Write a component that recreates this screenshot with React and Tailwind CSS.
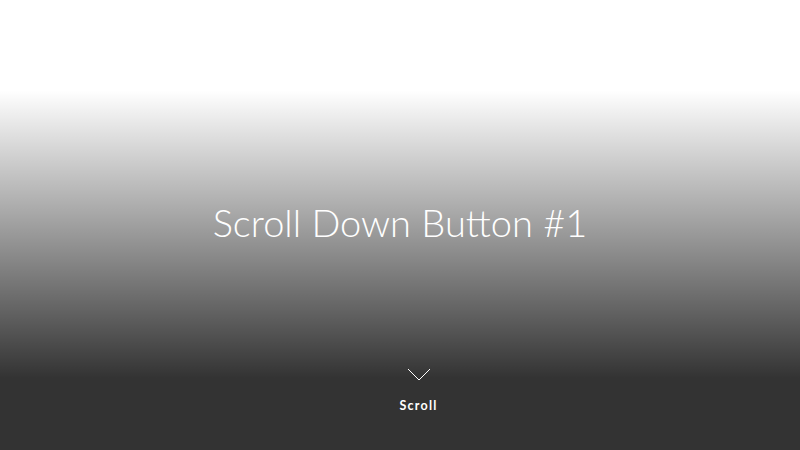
export default function App() {
  return (
    <section className="relative h-[450px] w-full overflow-hidden bg-white bg-[linear-gradient(to_bottom,rgba(0,0,0,0)_20%,rgba(0,0,0,0.8)_84%,rgba(0,0,0,0.8)_100%)]">
      <div className="flex flex-col items-center pt-[198px]">
        <h1 className="text-[38px] leading-[48px] font-light text-white [font-family:Lato,'Open_Sans',sans-serif]">
          Scroll Down Button #1
        </h1>
      </div>

      <a
        href="#"
        className="flex w-full justify-center pt-[122px] text-white no-underline"
      >
        <span className="ml-[37px] flex flex-col items-center">
          <svg width="24" height="13" viewBox="0 0 24 13" className="block">
            <polyline
              points="1,1 12,12 23,1"
              fill="none"
              stroke="white"
              strokeWidth="1"
            />
          </svg>
          <span className="mt-[19px] text-[12.5px] leading-none font-bold tracking-[0.1em] [font-family:Lato,sans-serif]">
            Scroll
          </span>
        </span>
      </a>
    </section>
  );
}
